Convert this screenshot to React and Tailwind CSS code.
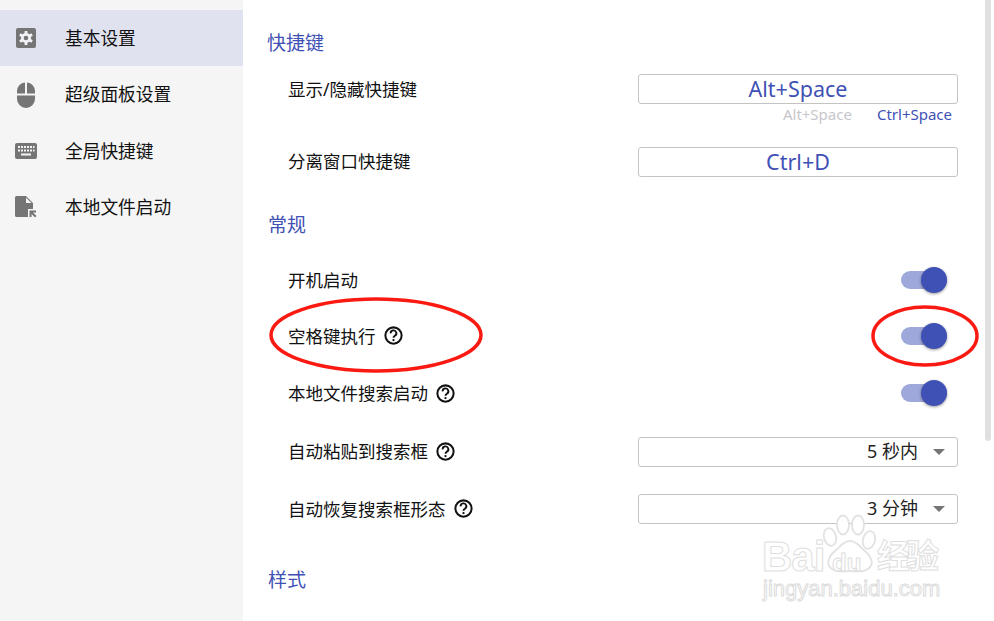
const FONT = "font-['Noto_Sans','Noto_Sans_CJK_SC',sans-serif]";

function GearIcon() {
  return (
    <svg width="20" height="20" viewBox="0 0 20 20">
      <rect x="0" y="0" width="20" height="20" rx="2" fill="#757575" />
      <circle cx="10" cy="10" r="5" fill="#f2f2f6" />
      <g stroke="#f2f2f6" strokeWidth="2.8">
        <path d="M10 3v14M3.900 6.500l12.200 7M3.900 13.500l12.200-7" />
      </g>
      <circle cx="10" cy="10" r="2.300" fill="#757575" />
    </svg>
  );
}
function MouseIcon() {
  return (
    <svg width="18" height="26" viewBox="0 0 18 26">
      <path d="M0 11.500V9a8.500 8.500 0 0 1 8-8.500v11H0zM10 .5A8.500 8.500 0 0 1 18 9v2.500h-8zM0 13.500h18V17a9 9 0 0 1-18 0z" fill="#757575" />
    </svg>
  );
}
function KeyboardIcon() {
  return (
    <svg width="22" height="16" viewBox="0 0 22 16">
      <rect width="22" height="16" rx="2" fill="#757575" />
      <g fill="#f5f5f5">
        <rect x="3" y="3" width="2" height="2" /><rect x="6" y="3" width="2" height="2" /><rect x="9" y="3" width="2" height="2" /><rect x="12" y="3" width="2" height="2" /><rect x="15" y="3" width="2" height="2" /><rect x="18" y="3" width="1.500" height="2" />
        <rect x="3" y="6.500" width="2" height="2" /><rect x="6" y="6.500" width="2" height="2" /><rect x="9" y="6.500" width="2" height="2" /><rect x="12" y="6.500" width="2" height="2" /><rect x="15" y="6.500" width="2" height="2" /><rect x="18" y="6.500" width="1.500" height="2" />
        <rect x="6" y="10.500" width="10" height="2" />
      </g>
    </svg>
  );
}
function FileIcon() {
  return (
    <svg width="22" height="22" viewBox="0 0 22 22">
      <path d="M1.500 0H11l7 7v6h-5v8H1.500A1.500 1.500 0 0 1 0 19.500v-18A1.500 1.500 0 0 1 1.500 0z" fill="#757575" />
      <path d="M11 1.500V7h5.500z" fill="#f5f5f5" />
      <path d="M14.500 14.500h6.500v2h-3l3.500 3.500-1.400 1.400-3.500-3.500v3h-2.100z" fill="#757575" />
    </svg>
  );
}

function NavItem({ icon, label, active, low }) {
  return (
    <div className={`flex items-center h-[56.400px] ${active ? "bg-[#e0e2ef]" : ""}`}>
      <div className="w-[65px] flex justify-center pr-[13px]">{icon}</div>
      <span className={`text-[17.700px] leading-[24px] text-[#111] ${low ? "mt-px" : "-mt-px"}`}>{label}</span>
    </div>
  );
}

function Help() {
  return (
    <svg className="ml-[8px]" width="19" height="19" viewBox="0 0 18 18">
      <circle cx="9" cy="9" r="7.700" fill="none" stroke="#111" strokeWidth="1.900" />
      <path d="M6.300 7a2.700 2.700 0 1 1 4 2.200c-.9.600-1.300 1-1.300 2" fill="none" stroke="#111" strokeWidth="1.800" />
      <circle cx="9" cy="13.300" r="1.100" fill="#111" />
    </svg>
  );
}

function Heading({ children, className = "" }) {
  return <div className={`pl-[25px] text-[19px] leading-[40px] text-[#3f51b5] ${className}`}>{children}</div>;
}

function Label({ children, help, className = "" }) {
  return (
    <div className={`flex items-center text-[17.500px] text-[#111] ${className}`}>
      <span>{children}</span>
      {help && <Help />}
    </div>
  );
}

function Row({ label, help, children, className = "" }) {
  return (
    <div className={`flex items-center justify-between pl-[45px] h-[57.300px] ${className}`}>
      <Label help={help}>{label}</Label>
      {children}
    </div>
  );
}

function KeyInput({ value }) {
  return (
    <div className="w-[320px] h-[30px] border border-[#c4c4c4] rounded-[3px] flex items-center justify-center text-[21.500px] text-[#3f51b5] bg-white">
      {value}
    </div>
  );
}

function Toggle() {
  return (
    <div className="relative w-[46px] h-[18px] mr-[11px] rounded-full bg-[#9fa8da]">
      <div className="absolute right-0 top-[-4px] w-[26px] h-[26px] rounded-full bg-[#3f51b5] shadow-[0_1px_3px_rgba(0,0,0,0.4)]" />
    </div>
  );
}

function Select({ value }) {
  return (
    <div className="w-[320px] h-[30px] border border-[#c4c4c4] rounded-[3px] flex items-center justify-end text-[18px] text-[#222] bg-white pr-[12px]">
      <span>{value}</span>
      <span className="ml-[15px] w-0 h-0 border-x-[6px] border-x-transparent border-t-[6px] border-t-[#757575]" />
    </div>
  );
}

function Ovals() {
  return (
    <svg className="absolute left-0 top-0 pointer-events-none" width="994" height="621" viewBox="0 0 994 621">
      <ellipse cx="376" cy="335" rx="105" ry="36" fill="none" stroke="#fb1a12" strokeWidth="3.500" />
      <ellipse cx="925" cy="336" rx="52" ry="29" fill="none" stroke="#fb1a12" strokeWidth="3.500" />
    </svg>
  );
}

function Watermark() {
  return (
    <div className="absolute left-[761px] top-[512px] w-[190px] h-[90px] pointer-events-none">
      <svg className="absolute left-[60px] top-[2px]" width="62" height="64" viewBox="0 0 62 64">
        <g fill="#fff" stroke="#e2e2e2" strokeWidth="1.800">
          <ellipse cx="9" cy="23" rx="6" ry="9" transform="rotate(-15 9 23)" />
          <ellipse cx="22" cy="11" rx="6" ry="9.500" />
          <ellipse cx="37" cy="11" rx="6" ry="9.500" />
          <ellipse cx="48" cy="26" rx="6" ry="9" transform="rotate(15 48 26)" />
          <path d="M29 27c7 0 10 6 15 10 6 5 10 13 3 18-6 4-12 2-18 2s-12 2-18-2c-7-5-3-13 3-18 5-4 8-10 15-10z" />
        </g>
      </svg>
      <div className="absolute left-[1px] top-[26px] text-[42px] leading-[38px] font-['Liberation_Sans',sans-serif] font-bold tracking-[-1px] text-white [-webkit-text-stroke:1px_#dedede]">Bai</div>
      <div className="absolute left-[71px] top-[38px] text-[24px] leading-[26px] font-['Liberation_Sans',sans-serif] font-bold text-white [-webkit-text-stroke:1px_#dedede]">du</div>
      <div className="absolute left-[116px] top-[22px] text-[33px] leading-[40px] font-bold text-white font-['Noto_Sans_CJK_SC',sans-serif] [-webkit-text-stroke:1px_#dedede] w-[80px] whitespace-nowrap tracking-[-4px]">经验</div>
      <div className="absolute left-[2px] top-[65px] text-[22px] leading-[24px] font-['Liberation_Sans',sans-serif] text-white [-webkit-text-stroke:1px_#dcdcdc] whitespace-nowrap">jingyan.baidu.com</div>
    </div>
  );
}

export default function App() {
  return (
    <div className={`relative flex w-[994px] h-[621px] overflow-hidden bg-white ${FONT}`}>
      <aside className="w-[243px] shrink-0 bg-[#f5f5f5] pt-[10px]">
        <NavItem active icon={<GearIcon />} label="基本设置" />
        <NavItem icon={<MouseIcon />} label="超级面板设置" />
        <NavItem low icon={<KeyboardIcon />} label="全局快捷键" />
        <NavItem icon={<FileIcon />} label="本地文件启动" />
      </aside>
      <main className="flex-1 pr-[36px] pt-[23px]">
        <Heading className="-ml-px">快捷键</Heading>
        <div className="mt-[11px] flex items-center justify-between pl-[45px] h-[30px]">
          <Label>显示/隐藏快捷键</Label>
          <KeyInput value="Alt+Space" />
        </div>
        <div className="flex justify-end gap-[25px] pr-[6px] h-[22px] items-center text-[15px] -mt-px">
          <span className="text-[#c6c6cc]">Alt+Space</span>
          <span className="text-[#3f51b5]">Ctrl+Space</span>
        </div>
        <div className="mt-[22px] flex items-center justify-between pl-[45px] h-[30px]">
          <Label className="-mt-[2px]">分离窗口快捷键</Label>
          <KeyInput value="Ctrl+D" />
        </div>
        <Heading className="mt-[28px]">常规</Heading>
        <div className="mt-[6px]">
          <Row label="开机启动"><Toggle /></Row>
          <Row label="空格键执行" help className="-mt-px"><Toggle /></Row>
          <Row label="本地文件搜索启动" help><Toggle /></Row>
          <Row label="自动粘贴到搜索框" help className="mt-px"><Select value="5 秒内" /></Row>
          <Row label="自动恢复搜索框形态" help><Select value="3 分钟" /></Row>
        </div>
        <Heading className="mt-[23px]">样式</Heading>
      </main>
      <div className="absolute left-[985px] top-0 w-[6px] h-[441px] rounded-b-[3px] bg-[#e0e0e0]" />
      <Ovals />
      <Watermark />
    </div>
  );
}
